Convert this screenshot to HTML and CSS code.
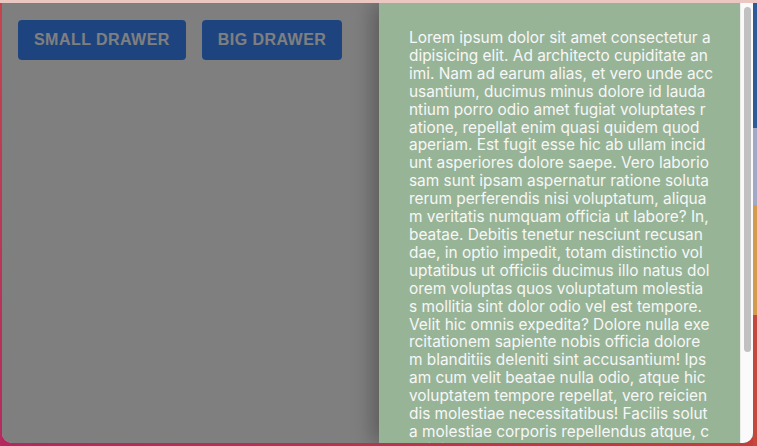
FILE: index.html
```html
<!DOCTYPE html>
<html lang="en">
<head>
<meta charset="utf-8">
<title>Drawer</title>
<link rel="stylesheet" href="styles.css">
</head>
<body>
<div class="window">
  <main class="page">
    <button class="btn">Small drawer</button>
    <button class="btn">Big drawer</button>
  </main>
  <div class="backdrop"></div>
  <aside class="drawer">
    <div class="drawer-body">
      <p class="drawer-text">Lorem ipsum dolor sit amet consectetur a<br>dipisicing elit. Ad architecto cupiditate an<br>imi. Nam ad earum alias, et vero unde acc<br>usantium, ducimus minus dolore id lauda<br>ntium porro odio amet fugiat voluptates r<br>atione, repellat enim quasi quidem quod<br>aperiam. Est fugit esse hic ab ullam incid<br>unt asperiores dolore saepe. Vero laborio<br>sam sunt ipsam aspernatur ratione soluta<br>rerum perferendis nisi voluptatum, aliqua<br>m veritatis numquam officia ut labore? In,<br>beatae. Debitis tenetur nesciunt recusan<br>dae, in optio impedit, totam distinctio vol<br>uptatibus ut officiis ducimus illo natus dol<br>orem voluptas quos voluptatum molestia<br>s mollitia sint dolor odio vel est tempore.<br>Velit hic omnis expedita? Dolore nulla exe<br>rcitationem sapiente nobis officia dolore<br>m blanditiis deleniti sint accusantium! Ips<br>am cum velit beatae nulla odio, atque hic<br>voluptatem tempore repellat, vero reicien<br>dis molestiae necessitatibus! Facilis solut<br>a molestiae corporis repellendus atque, c<br>upiditate dolorum quas. Voluptate, quod. L<br>aborum quae nostrum voluptatibus cum qua<br>si deleniti, eum repudiandae ducimus iure<br>expedita. Quo, ipsum sint.</p>
    </div>
    <div class="scrollbar"><div class="scrollbar-thumb"></div></div>
  </aside>
</div>
</body>
</html>
```

FILE: styles.css
```css
body {
  margin: 0;
  box-sizing: border-box;
  height: 446px;
  padding: 3px 4px 3px 2px;
  background:
    linear-gradient(#eac7c0, #eac7c0) top left / 100% 3px no-repeat,
    linear-gradient(to bottom, #2c5b98 0 128px, #a2a9c6 128px 205px, #d59b4c 205px 315px, #c4483c 315px) top right / 4px 100% no-repeat,
    linear-gradient(to bottom, #c4444e, #b52a5e) top left / 2px 100% no-repeat,
    linear-gradient(to right, #b3285f, #c43e3a);
}

.window {
  position: relative;
  height: 440px;
  overflow: hidden;
  background: #ffffff;
  border-radius: 0 0 10px 10px;
}

.page {
  display: flex;
  align-items: flex-start;
  gap: 16px;
  padding: 17px 16px;
}

.btn {
  height: 40px;
  padding: 0 16px;
  border: 0;
  border-radius: 4px;
  background: #3a89fc;
  color: #ffffff;
  font: 700 16px "Liberation Sans", Arial, sans-serif;
  letter-spacing: 0.45px;
  text-transform: uppercase;
}

.backdrop {
  position: absolute;
  inset: 0;
  background: rgba(0, 0, 0, 0.5);
}

.drawer {
  position: absolute;
  top: 0;
  right: 0;
  bottom: 0;
  width: 374px;
  display: flex;
  background: #98b497;
  box-shadow: -6px 0 20px rgba(0, 0, 0, 0.3);
}

.drawer-body {
  flex: 1;
  min-width: 0;
  overflow: hidden;
  padding: 26px 0 30px 30px;
}

.drawer-text {
  margin: 0;
  color: #f7f7f7;
  font: 15.4px/17.9px Inter, "Noto Sans", sans-serif;
  white-space: nowrap;
}

.scrollbar {
  flex: none;
  width: 13px;
  box-sizing: border-box;
  padding: 4px 2px 0 3px;
  background: #fafafa;
  border-left: 1px solid #ececec;
}

.scrollbar-thumb {
  height: 345px;
  border-radius: 4px;
  background: #c1c1c1;
}
```
